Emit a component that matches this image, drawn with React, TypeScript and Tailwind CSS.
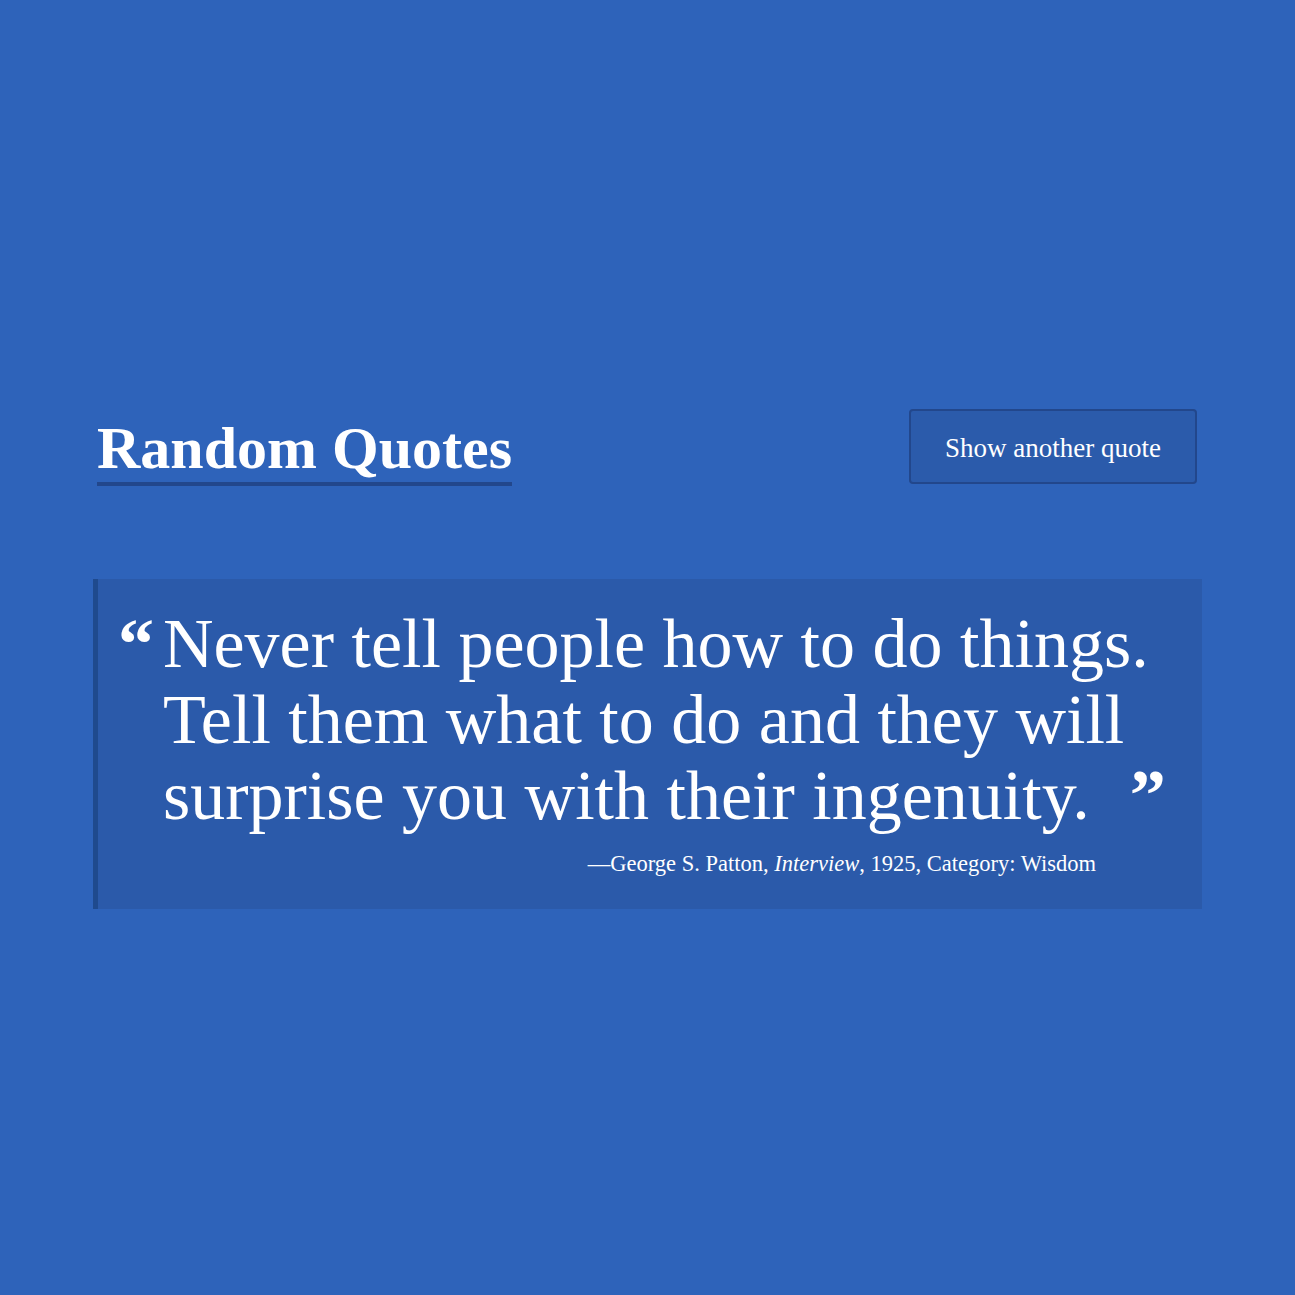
import React, { useState } from "react";

type Quote = {
  text: string;
  author: string;
  source: string;
  year: string;
  category: string;
};

const quotes: Quote[] = [
  {
    text: "Never tell people how to do things. Tell them what to do and they will surprise you with their ingenuity.",
    author: "George S. Patton",
    source: "Interview",
    year: "1925",
    category: "Wisdom",
  },
];

const serif = "font-['Liberation_Serif','Times_New_Roman',serif]";

const App = () => {
  const [index, setIndex] = useState<number>(0);
  const quote = quotes[index];

  const nextQuote = () => setIndex((index + 1) % quotes.length);

  return (
    <div className={`min-h-screen bg-[#2e63ba] text-white ${serif}`}>
      <div className="mx-auto w-[1109px] pt-[409px]">
        <header className="flex items-start justify-between pl-1 pr-[5px]">
          <h1 className="mt-[5px] border-b-[4px] border-[#22478c] text-[60px] font-bold leading-[68px]">
            Random Quotes
          </h1>
          <button
            className="h-[75px] w-[288px] rounded border-2 border-[#22478c] bg-[#2b5bab] pt-[3px] text-[27px]"
            onClick={() => nextQuote()}
          >
            Show another quote
          </button>
        </header>

        <blockquote className="mt-[93px] border-l-[5px] border-[#1f4a8e] bg-[#2b5aaa] pt-[27px] pb-[31px] pl-5 pr-6">
          <div className="flex items-start">
            <span className="mt-[13px] w-[45px] shrink-0 text-[72px] font-bold leading-[50px]">
              &ldquo;
            </span>
            <p className="text-[70px] leading-[76px]">
              {quote.text}
              <span className="relative top-[12px] ml-10 inline-block align-top text-[72px] font-bold leading-[50px]">
                &rdquo;
              </span>
            </p>
          </div>
          <p className="mt-[16px] pr-[82px] text-right text-[22.5px] leading-[28px]">
            &mdash;{quote.author}, <i>{quote.source}</i>, {quote.year}, Category:{" "}
            {quote.category}
          </p>
        </blockquote>
      </div>
    </div>
  );
};

export default App;
